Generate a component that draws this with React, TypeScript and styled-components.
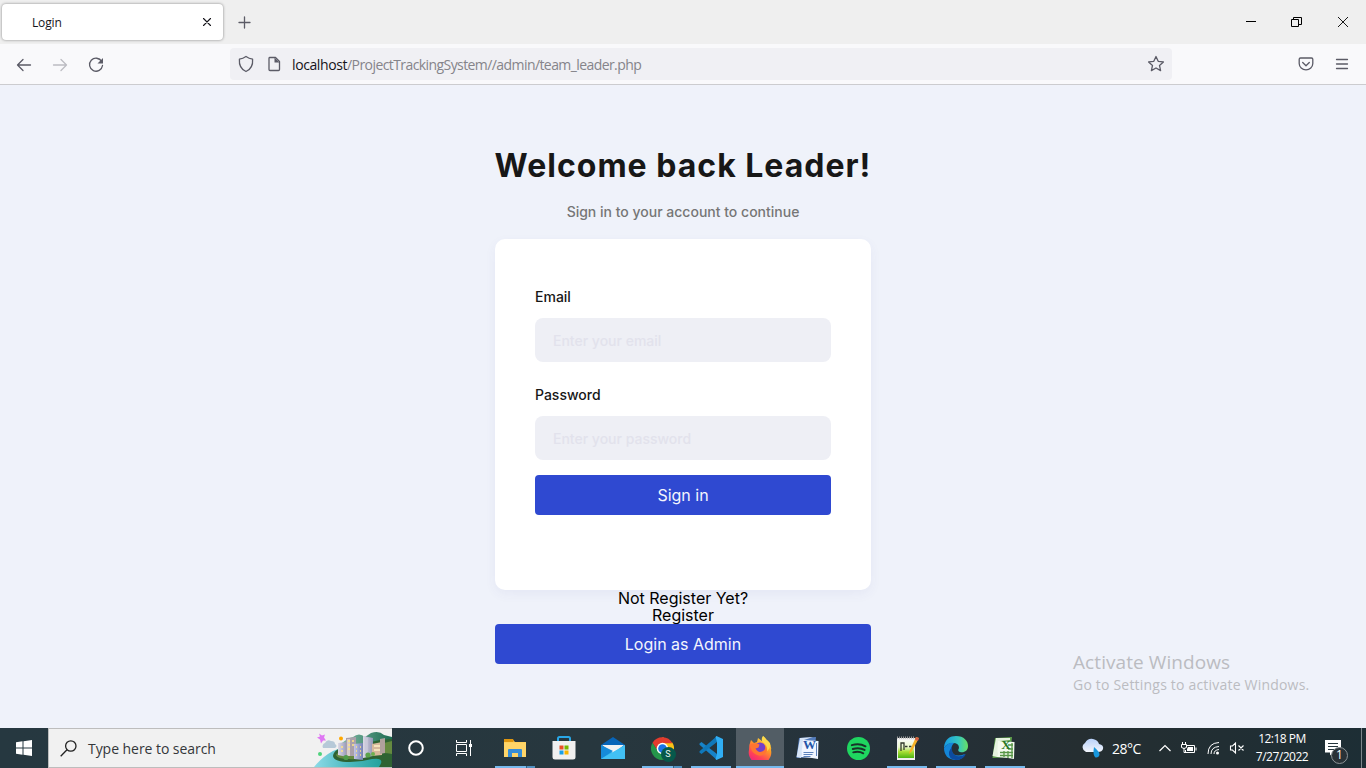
import React from "react";
import styled, { createGlobalStyle } from "styled-components";

const GlobalStyle = createGlobalStyle`
  * { box-sizing: border-box; }
  body { margin: 0; overflow: hidden; }
  svg { display: block; flex: none; }
`;

const ui = `"Open Sans", "Noto Sans", sans-serif`;

const Screen = styled.div`
  position: relative;
  display: flex;
  flex-direction: column;
  width: 1366px;
  height: 768px;
  overflow: hidden;
  font-family: ${ui};
`;

/* ---------- browser ---------- */

const TabStrip = styled.div`
  display: flex;
  align-items: flex-start;
  height: 44px;
  background: #efefef;
  padding: 4px 0 0 2px;
`;

const Tab = styled.div`
  display: flex;
  align-items: center;
  justify-content: space-between;
  width: 221px;
  height: 36px;
  padding: 0 11px 0 30px;
  border-radius: 4px;
  background: #fff;
  box-shadow: 0 0 3px rgba(0, 0, 0, 0.45);
  font-size: 12px;
  letter-spacing: -0.15px;
  color: #15141a;
`;

const NewTab = styled.div`
  padding: 12px 0 0 15px;
`;

const WindowControls = styled.div`
  display: flex;
  gap: 35px;
  margin-left: auto;
  padding: 12px 17px 0 0;
`;

const Toolbar = styled.div`
  display: flex;
  align-items: center;
  height: 41px;
  background: #f9f9fb;
  border-bottom: 1px solid #cccccf;
`;

const NavButtons = styled.div`
  display: flex;
  gap: 20px;
  width: 230px;
  padding: 1px 0 0 16px;
`;

const AddressBar = styled.div`
  display: flex;
  align-items: center;
  width: 942px;
  height: 32px;
  padding: 0 7px 0 7px;
  border-radius: 4px;
  background: #f0f0f4;
`;

const Url = styled.div`
  flex: 1;
  padding: 1px 0 0 9px;
  font-size: 14px;
  letter-spacing: -0.58px;
  white-space: nowrap;
  color: #85848a;
  b { font-weight: 400; letter-spacing: -0.4px; color: #15141a; }
`;

const ToolbarEnd = styled.div`
  display: flex;
  gap: 19px;
  margin-left: auto;
  padding-right: 16px;
`;

/* ---------- page ---------- */

const Page = styled.main`
  display: flex;
  flex-direction: column;
  align-items: center;
  height: 643px;
  padding-top: 61px;
  background: #eff2fa;
  font-family: Inter, sans-serif;
`;

const Title = styled.h1`
  margin: 0;
  font-size: 32px;
  line-height: 40px;
  font-weight: 700;
  letter-spacing: 1px;
  white-space: nowrap;
  color: #171717;
`;

const Subtitle = styled.p`
  margin: 16px 0 17px;
  font-size: 14px;
  line-height: 20px;
  font-weight: 500;
  color: #767676;
`;

const Card = styled.form`
  display: flex;
  flex-direction: column;
  width: 376px;
  height: 351px;
  padding: 48px 40px 0;
  border-radius: 10px;
  background: #fff;
  box-shadow: 0 4px 12px rgba(60, 60, 160, 0.06);
`;

const Label = styled.label`
  margin-bottom: 11px;
  font-size: 14px;
  line-height: 20px;
  font-weight: 500;
  color: #171717;
`;

const Input = styled.input`
  height: 44px;
  margin: 0 0 23px;
  padding: 0 18px;
  border: 0;
  border-radius: 8px;
  outline: 0;
  background: #eeeff5;
  font: 500 14px Inter, sans-serif;
  &::placeholder { color: #e2e2ec; opacity: 1; }
  &:last-of-type { margin-bottom: 15px; }
`;

const Button = styled.button<{ $width: number }>`
  width: ${(p) => p.$width}px;
  height: 40px;
  flex: none;
  padding: 0 0 1px;
  border: 0;
  border-radius: 4px;
  background: #2f49d1;
  color: #f4f5fd;
  font: 400 16px Inter, sans-serif;
`;

const Register = styled.div`
  font-size: 16px;
  line-height: 17px;
  text-align: center;
  color: #000;
`;

const Watermark = styled.div`
  position: absolute;
  left: 1073px;
  top: 650px;
  white-space: nowrap;
  color: #bbbcc1;
`;

const WatermarkTitle = styled.div`
  font-size: 19px;
  line-height: 24px;
  letter-spacing: 0.08px;
`;

const WatermarkText = styled.div`
  font-size: 14px;
  line-height: 21px;
  letter-spacing: 0.2px;
`;

/* ---------- taskbar ---------- */

const Taskbar = styled.div`
  display: flex;
  height: 40px;
  background: linear-gradient(90deg, #263840 0%, #27373e 45%, #25313a 65%, #252e31 79%, #1d2e35 100%);
  color: #fff;
`;

const TaskCell = styled.div<{ $active?: boolean; $running?: boolean; $split?: boolean }>`
  display: flex;
  align-items: center;
  justify-content: center;
  width: 48px;
  height: 40px;
  background-color: ${(p) => (p.$active ? "#525d65" : "transparent")};
  background-image: ${(p) =>
    p.$split
      ? "linear-gradient(90deg, #76b9ed 31px, #38617f 31px, #38617f 32px, #5190c0 32px)"
      : p.$running || p.$active
        ? "linear-gradient(#76b9ed, #76b9ed)"
        : "none"};
  background-size: ${(p) => (p.$active ? 48 : 40)}px 2px;
  background-position: center bottom;
  background-repeat: no-repeat;
`;

const Search = styled.div`
  display: flex;
  align-items: center;
  width: 344px;
  height: 40px;
  padding-left: 11px;
  border: 1px solid #bdbdbd;
  border-right: 0;
  background: #f1f1f1;
  color: #34373a;
  font-size: 14px;
  letter-spacing: -0.05px;
`;

const SearchText = styled.span`
  flex: 1;
  padding-left: 11px;
  white-space: nowrap;
`;

const Apps = styled.div`
  display: flex;
  gap: 1px;
  padding-left: 3px;
`;

const Tray = styled.div`
  display: flex;
  align-items: center;
  margin-left: auto;
`;

const Temperature = styled.span`
  width: 54px;
  padding-left: 8px;
  font-size: 14px;
  letter-spacing: -0.5px;
  white-space: nowrap;
`;

const TrayIcons = styled.div`
  display: flex;
  align-items: center;
  gap: 8px;
`;

const Clock = styled.div`
  width: 74px;
  font-size: 12px;
  line-height: 18px;
  letter-spacing: -0.5px;
  text-align: center;
`;

const ShowDesktop = styled.div`
  width: 5px;
  height: 40px;
  margin-left: 11px;
  border-left: 1px solid #7c878c;
`;

/* ---------- icons ---------- */

const line = { fill: "none", stroke: "#5b5b66", strokeWidth: 1.3, strokeLinecap: "round", strokeLinejoin: "round" } as const;

const SearchArt = () => (
  <svg width="78" height="38" viewBox="0 0 78 38">
    <defs>
      <linearGradient id="river" x1="0" x2="1"><stop stopColor="#8ddbe8" /><stop offset=".45" stopColor="#4cb9bf" /><stop offset="1" stopColor="#179b91" /></linearGradient>
      <linearGradient id="wall"><stop stopColor="#dcdae6" /><stop offset="1" stopColor="#9496b6" /></linearGradient>
      <linearGradient id="wallBlue"><stop stopColor="#c3c6e6" /><stop offset="1" stopColor="#7482b4" /></linearGradient>
      <linearGradient id="hill" x1="0" x2="1"><stop stopColor="#7fb9a4" /><stop offset="1" stopColor="#1d6b51" /></linearGradient>
    </defs>
    <path d="M28 14Q34 9 39 8Q45 3 51 8L57 4Q65 1 70 6L78 8V22H28Z" fill="url(#hill)" />
    <path d="M0 38Q8 28 19 22Q28 17 38 20L78 14V38Z" fill="url(#river)" />
    <path d="M19 27Q20 19 34 18L66 11L78 10V38H65Q72 28 58 30Q47 33 36 33Q20 33 19 27Z" fill="#2e6332" />
    <path d="M22 26Q25 20 40 21L70 14L78 12V25Q66 22 56 27Q45 31 35 30Q23 30 22 26Z" fill="#658a40" />
    <path d="M24 14L33 13V28L24 26Z" fill="url(#wall)" />
    <path d="M32 9L42 8V27H32Z" fill="#aaa0aa" />
    <path d="M33 10L36 10V27H33Z" fill="#d5ccca" />
    <path d="M40 15L49 14V31L40 30Z" fill="url(#wallBlue)" />
    <path d="M49 7L59 9V27L49 29Z" fill="url(#wall)" />
    <path d="M58 15L68 13V26L58 27Z" fill="#d7b99b" />
    <path d="M66 10L71 9V24L66 25Z" fill="#b0a19d" />
    <path d="M34 12h2m2 0h2m-6 4h2m2 0h2m-6 4h2m-9-2h2m-2 4h2" stroke="#ffe584" strokeWidth="1.3" />
    <path d="M42 18h1m3 0h1m-5 4h1m3 0h1m-5 4h1m3 0h1" stroke="#ffe584" strokeWidth="1.600" />
    <path d="M53 9v17" stroke="#d1d0df" />
    <path d="M60 17h6m-6 4h6" stroke="#fff0c6" strokeWidth="1.400" />
    <circle cx="32" cy="28.500" r="2.600" fill="#4f9b49" /><circle cx="54" cy="26" r="2.600" fill="#5ba34a" /><circle cx="59" cy="25" r="2" fill="#6fb04f" />
    <path d="M9 19a3.500 3.500 0 0 1 2-5q2-4 6-2q4 0 4 3q3 2 0 4z" fill="#b6c9d8" />
    <path d="M5 4.500l3 2 3-1-1 3 2 3-3 0-2 3-1-4-3-2 3-1z" fill="#df78f3" />
    <circle cx="27" cy="9.500" r="2" fill="#ffa800" /><circle cx="6" cy="25" r="2" fill="#4fd37c" />
  </svg>
);

const Explorer = () => (
  <svg width="22" height="20" viewBox="0 0 22 20">
    <path d="M0 2h9l2 2h11v15H0z" fill="#ffd15d" />
    <path d="M0 1h9l1 2-1 1H0z" fill="#df9610" />
    <path d="M0 5h22v14H0z" fill="#ffd568" />
    <path d="M4 19v-7q0-1 1-1h12q1 0 1 1v7h-4v-4H8v4z" fill="#368dd7" />
  </svg>
);

const Store = () => (
  <svg width="24" height="24" viewBox="0 0 24 24">
    <path d="M6 6V2.500Q6 1 7.500 1h9Q18 1 18 2.500V6" fill="none" stroke="#29a8e8" strokeWidth="2" />
    <path d="M.5 5h23v16q0 2.500-2.500 2.500H3Q.5 23.500 .5 21z" fill="#f0f0f0" />
    <path d="M7.500 9.500h4v4h-4z" fill="#e94f26" /><path d="M12.500 9.500h4v4h-4z" fill="#78b700" />
    <path d="M7.500 14.500h4v4h-4z" fill="#1ba0e7" /><path d="M12.500 14.500h4v4h-4z" fill="#f9b500" />
  </svg>
);

const Mail = () => (
  <svg width="24" height="23" viewBox="0 0 24 23">
    <path d="M0 8L12 0l12 8v6H0z" fill="#0865b8" />
    <path d="M1 8h22L12 17z" fill="#f2f2f2" />
    <path d="M0 8l12 8 12-8v14H0z" fill="#31b3ed" />
    <path d="M0 22L12 14 0 8z" fill="#168bd9" /><path d="M0 22L24 8v14z" fill="#42c0f4" />
  </svg>
);

const BadgeLetter = styled.span`
  position: absolute;
  left: 10px;
  top: 10px;
  width: 15px;
  height: 15px;
  border-radius: 50%;
  background: #07594b;
  color: #e8f3ef;
  font: 9px/15px Roboto, sans-serif;
  text-align: center;
`;

const IconHolder = styled.span`
  position: relative;
  width: 23px;
  height: 23px;
`;

const OfficeHolder = styled(IconHolder)`
  margin-right: 3px;
`;

const Chrome = () => (
  <IconHolder>
    <svg width="23" height="23" viewBox="0 0 24 24">
      <path d="M12 12V0l10.400 6A12 12 0 0 1 12 24l5-9z" fill="#fbc116" />
      <path d="M12 12l-5 2L1.600 6A12 12 0 0 0 12 24l5-9z" fill="#24964a" />
      <path d="M12 12L7 14 1.600 6A12 12 0 0 1 22.400 6.500H12z" fill="#e33b2e" />
      <circle cx="12" cy="12" r="6" fill="#fff" /><circle cx="12" cy="12" r="4.500" fill="#1a73e8" />
    </svg>
    <BadgeLetter>S</BadgeLetter>
  </IconHolder>
);

const VSCode = () => (
  <svg width="24" height="24" viewBox="0 0 24 24">
    <path d="M.5 7.500L2.500 6 18 18v6L.5 8.800z" fill="#1783c9" />
    <path d="M.5 16.500L2.500 18 18 6V0L.5 15.200z" fill="#0f78ba" />
    <path d="M17.500 0L24 3v18l-6.500 3-1-1 1.500-5V6l-1.500-5z" fill="#30aef4" />
  </svg>
);

const Firefox = () => (
  <svg width="24" height="24" viewBox="0 0 24 24">
    <defs><linearGradient id="fox" x1=".8" y1="0" x2=".3" y2="1"><stop stopColor="#fff34a" /><stop offset=".4" stopColor="#ff9a25" /><stop offset=".75" stopColor="#ff4058" /><stop offset="1" stopColor="#ed237f" /></linearGradient></defs>
    <path d="M3 4l3 3 3-1 1-4 4 3 1-5q3 2 3 4l2 1q4 5 3 9a11.300 11.300 0 1 1-22 0Q1 8 3 4z" fill="url(#fox)" />
    <circle cx="12" cy="12" r="5.500" fill="#7541c9" />
    <path d="M2 9q4-3 9.500-.5l-1 3-3 1q2.500 4.500 6.500 3 4-1.500 3-6 3 3 1 7-4.500 5-10 2-5-2.500-6-9.500z" fill="#ff7530" />
    <path d="M15 0q-3 4 1 7 4 3 3 8 4-3 3-8l-3-3z" fill="#ffd94a" />
  </svg>
);

const OfficeLetter = styled.span<{ $color: string }>`
  position: absolute;
  left: 8px;
  top: 1px;
  width: 12px;
  font: 700 13px/14px "Liberation Serif", serif;
  text-align: center;
  text-indent: ${(p) => (p.$color === "#2455a8" ? -1 : 0)}px;
  color: ${(p) => p.$color};
`;

const Word = () => (
  <OfficeHolder>
    <svg width="23" height="23" viewBox="0 0 23 23">
      <path d="M3 1L20 0l-2 20-17.500 1z" fill="#547dbd" /><path d="M4 1l13-1-9 3-3 18-4.500-1z" fill="#d7e5f7" />
      <path d="M7 3l15.500 1-.5 18-6-1-11-1z" fill="#f2f6ff" />
      <path d="M7.500 15.500h10m-10 2h9m-9 2h7M20.500 6v13" stroke="#5d82bb" />
    </svg>
    <OfficeLetter $color="#2455a8">W</OfficeLetter>
  </OfficeHolder>
);

const Spotify = () => (
  <svg width="23" height="23" viewBox="0 0 24 24">
    <circle cx="12" cy="12" r="12" fill="#1fd660" />
    <path d="M5 8.500q8-2.400 14.300 1.200M6 12.500q7-2 12.300 1M6.500 16q6-1.500 10.500 1" fill="none" stroke="#183329" strokeWidth="2" strokeLinecap="round" />
  </svg>
);

const Notepad = () => (
  <svg width="23" height="24" viewBox="0 0 23 24">
    <defs><linearGradient id="note" x1="0" y1="0" x2="0" y2="1"><stop stopColor="#f8fbf4" /><stop offset=".4" stopColor="#eaf8c8" /><stop offset=".65" stopColor="#a8df36" /><stop offset="1" stopColor="#4db312" /></linearGradient></defs>
    <path d="M1 2h18v22H1z" fill="#eee" /><path d="M2 4h16v18H2z" fill="url(#note)" />
    <path d="M1 1.500h18" stroke="#999" strokeDasharray="1 1" strokeWidth="2" />
    <path d="M5 15V7h3v7M9 10.500h2.500m1.500 0h2.500" fill="none" stroke="#333b2c" strokeWidth="1.300" />
    <path d="M13 18l1-4L20 1l3 1-7 13z" fill="#f6b127" /><path d="M20 1l3 1-1 3-3-1z" fill="#d66047" />
  </svg>
);

const Edge = () => (
  <svg width="24" height="24" viewBox="0 0 24 24">
    <defs><linearGradient id="edgeTop"><stop stopColor="#179ae4" /><stop offset=".6" stopColor="#35c7bf" /><stop offset="1" stopColor="#69df63" /></linearGradient></defs>
    <path d="M0 11C1 3 6 0 12 0c8 0 12 5 12 10s-4 7-8 6q-3-1-1-4 0-5-6-5-6 0-9 5z" fill="url(#edgeTop)" />
    <path d="M0 12q4-6 10-5-4 4-2 9 3 6 13 2-3 6-9 6C4 24 0 19 0 12z" fill="#1486d8" />
    <path d="M8 11q-1 7 5 9 4 1 9-2-3 6-10 6-8-1-7-8 1-3 3-5z" fill="#0c4ba0" />
  </svg>
);

const Excel = () => (
  <OfficeHolder>
    <svg width="23" height="23" viewBox="0 0 23 23">
      <path d="M3 1L20 0l-2 20-17.500 1z" fill="#62a34e" /><path d="M4 1h14v2L8 4 5 20l-4.500-1z" fill="#e6f2df" />
      <path d="M6 4l16.500 1-.5 17-6-1-11-1z" fill="#f4faef" />
      <path d="M8 15.500h13m-13 3h13M12 14v6m4-6v7m4-15v15M16 8h5m-5 4h5" stroke="#589647" strokeWidth="1.300" />
    </svg>
    <OfficeLetter $color="#297726">X</OfficeLetter>
  </OfficeHolder>
);

const Weather = () => (
  <svg width="23" height="20" viewBox="0 0 23 20">
    <defs><linearGradient id="cloud" x1="0" y1="0" x2="0" y2="1"><stop stopColor="#b8d1fa" /><stop offset="1" stopColor="#f2f5fc" /></linearGradient></defs>
    <path d="M5 14a5 5 0 0 1-1-9q3-5 8-4 5 1 6 5 5 1 4 5-1 3-5 3z" fill="url(#cloud)" />
    <path d="M13 9q6 5 5.500 8-1 3-4 2.500-3-2-1.500-10.500z" fill="#1796dd" />
  </svg>
);

const white = { fill: "none", stroke: "#fff", strokeWidth: 1.2 } as const;

const NotificationHolder = styled.span`
  position: relative;
  width: 26px;
  height: 28px;
  margin-left: 5px;
`;

const NotificationCount = styled.span`
  position: absolute;
  left: 7px;
  top: 13px;
  width: 17px;
  height: 17px;
  border: 1px solid #8c9498;
  border-radius: 50%;
  background: #293237;
  font-size: 12px;
  line-height: 14px;
  text-align: center;
`;

const Notification = () => (
  <NotificationHolder>
    <svg width="18" height="24" viewBox="0 0 18 24"><path d="M1 6h16v12.500H9L6 21.500v-3H1z" fill="#fff" /><path d="M4 9.500h10m-10 3h10m-10 3h7" stroke="#26363d" /></svg>
    <NotificationCount>1</NotificationCount>
  </NotificationHolder>
);

export default function App() {
  return (
    <Screen>
      <GlobalStyle />
      <TabStrip>
        <Tab>
          Login
          <svg width="10" height="10" viewBox="0 0 10 10"><path d="M1.500 1.500l7 7m0-7l-7 7" {...line} stroke="#15141a" strokeWidth="1.100" /></svg>
        </Tab>
        <NewTab><svg width="13" height="13" viewBox="0 0 13 13"><path d="M6.500 1v11M1 6.500h11" {...line} strokeWidth="1.300" /></svg></NewTab>
        <WindowControls>
          <svg width="11" height="11" viewBox="0 0 11 11"><path d="M1 5.500h10" stroke="#000" /></svg>
          <svg width="11" height="12" viewBox="0 0 11 12"><path d="M.5 3.500h7v7h-7zM2.500 3.500v-2h8v7h-3" fill="none" stroke="#000" /></svg>
          <svg width="12" height="12" viewBox="0 0 12 12"><path d="M1 1l10 10M11 1L1 11" stroke="#000" strokeWidth=".9" /></svg>
        </WindowControls>
      </TabStrip>
      <Toolbar>
        <NavButtons>
          <svg width="16" height="16" viewBox="0 0 16 16"><path d="M14.500 8H1.500M7 2.500L1.500 8 7 13.500" {...line} /></svg>
          <svg width="16" height="16" viewBox="0 0 16 16"><path d="M1.500 8h13M9 2.500L14.500 8 9 13.500" {...line} stroke="#bcbcc2" /></svg>
          <svg width="16" height="16" viewBox="0 0 16 16"><path d="M13.700 4.500A6.500 6.500 0 1 0 14.500 8.500" {...line} /><path d="M15 1v5.500H9.500z" fill="#5b5b66" /></svg>
        </NavButtons>
        <AddressBar>
          <svg width="18" height="18" viewBox="0 0 18 18"><path d="M9 1.500Q12 3.700 15.600 4.200C16 9 14.500 14 9 16.500 3.500 14 2 9 2.400 4.200Q6 3.700 9 1.500z" {...line} /></svg>
          <svg width="28" height="16" viewBox="0 0 28 16"><path d="M14.500 1.500h6l4 4v8q0 1-1 1h-8.500q-1 0-1-1v-11q0-1 .5-1z" {...line} /><path d="M19.500 1.500l5 5h-5z" fill="#5b5b66" /></svg>
          <Url><b>localhost</b>/ProjectTrackingSystem//admin/team_leader.php</Url>
          <svg width="18" height="18" viewBox="0 0 18 18"><path d="M9 1.500l2.200 4.800 5.200.6-3.900 3.500 1.100 5.200L9 13l-4.600 2.600 1.100-5.200L1.600 6.900l5.200-.6z" {...line} /></svg>
        </AddressBar>
        <ToolbarEnd>
          <svg width="18" height="16" viewBox="0 0 18 16"><path d="M3.500 2h11q1.300 0 1.300 1.300V7.500a6.800 6.300 0 0 1-13.600 0V3.300Q2.200 2 3.500 2zM5.700 6.500L9 9.700l3.300-3.200" {...line} /></svg>
          <svg width="16" height="16" viewBox="0 0 16 16"><path d="M2.500 3.500h11M2.500 8h11M2.500 12.500h11" {...line} /></svg>
        </ToolbarEnd>
      </Toolbar>

      <Page>
        <Title>Welcome back Leader!</Title>
        <Subtitle>Sign in to your account to continue</Subtitle>
        <Card>
          <Label htmlFor="email">Email</Label>
          <Input id="email" type="email" placeholder="Enter your email" />
          <Label htmlFor="password">Password</Label>
          <Input id="password" type="password" placeholder="Enter your password" />
          <Button type="button" $width={296}>Sign in</Button>
        </Card>
        <Register>Not Register Yet?<br />Register</Register>
        <Button type="button" $width={376}>Login as Admin</Button>
      </Page>

      <Watermark>
        <WatermarkTitle>Activate Windows</WatermarkTitle>
        <WatermarkText>Go to Settings to activate Windows.</WatermarkText>
      </Watermark>

      <Taskbar>
        <TaskCell><svg width="16" height="16" viewBox="0 0 16 16" fill="#fff"><path d="M0 2.200l6.500-.9v6.200H0zM7.500 1.200L16 0v7.500H7.500zM0 8.500h6.500v6.200L0 13.800zM7.500 8.500H16V16l-8.500-1.200z" /></svg></TaskCell>
        <Search>
          <svg width="17" height="17" viewBox="0 0 17 17"><circle cx="10.800" cy="6" r="5.200" fill="none" stroke="#222" strokeWidth="1.300" /><path d="M7 9.800L.7 16.200" stroke="#222" strokeWidth="1.300" /></svg>
          <SearchText>Type here to search</SearchText>
          <SearchArt />
        </Search>
        <TaskCell><svg width="16" height="16" viewBox="0 0 16 16"><circle cx="8" cy="8" r="6.800" fill="none" stroke="#fff" strokeWidth="2" /></svg></TaskCell>
        <TaskCell><svg width="16" height="16" viewBox="0 0 16 16"><path d="M.5 0v2.500h10V0M.5 4.500h10v7H.5zM.5 16v-2.500h10V16M14.500 0v4m0 3v9" {...white} strokeWidth="1" /><path d="M13 4h3v3h-3z" fill="#fff" /></svg></TaskCell>
        <Apps>
          <TaskCell $running $split><Explorer /></TaskCell>
          <TaskCell><Store /></TaskCell>
          <TaskCell><Mail /></TaskCell>
          <TaskCell $running $split><Chrome /></TaskCell>
          <TaskCell $running><VSCode /></TaskCell>
          <TaskCell $active><Firefox /></TaskCell>
          <TaskCell><Word /></TaskCell>
          <TaskCell><Spotify /></TaskCell>
          <TaskCell $running><Notepad /></TaskCell>
          <TaskCell $running><Edge /></TaskCell>
          <TaskCell $running><Excel /></TaskCell>
        </Apps>
        <Tray>
          <Weather />
          <Temperature>28°C</Temperature>
          <TrayIcons>
            <svg width="14" height="8" viewBox="0 0 14 8"><path d="M1.500 7L7 1.500 12.500 7" {...white} /></svg>
            <svg width="17" height="13" viewBox="0 0 17 13"><path d="M6 3.500h8.500v7H5.500V8M16 5.500v3M2.500 0v2.500M5.500 0v2.500M1.500 2.500h5v3q-2.500 2-5 0zM4 6v4.500h2" {...white} strokeWidth="1" /><path d="M8 5h5v4H7V7z" fill="#fff" /></svg>
            <svg width="16" height="14" viewBox="0 0 16 14"><path d="M3 13Q3 2 14 1.500M6 13q0-7 8-7.500M9 13q0-4 5-4.500" {...white} strokeWidth="1" /><circle cx="12.500" cy="12" r="1.500" fill="#fff" /></svg>
            <svg width="16" height="14" viewBox="0 0 16 14"><path d="M1.500 5h2l3-3v10l-3-3h-2zM9.500 4.500l5 5m0-5l-5 5" {...white} strokeWidth="1.100" /></svg>
          </TrayIcons>
          <Clock>12:18 PM<br />7/27/2022</Clock>
          <Notification />
          <ShowDesktop />
        </Tray>
      </Taskbar>
    </Screen>
  );
}
